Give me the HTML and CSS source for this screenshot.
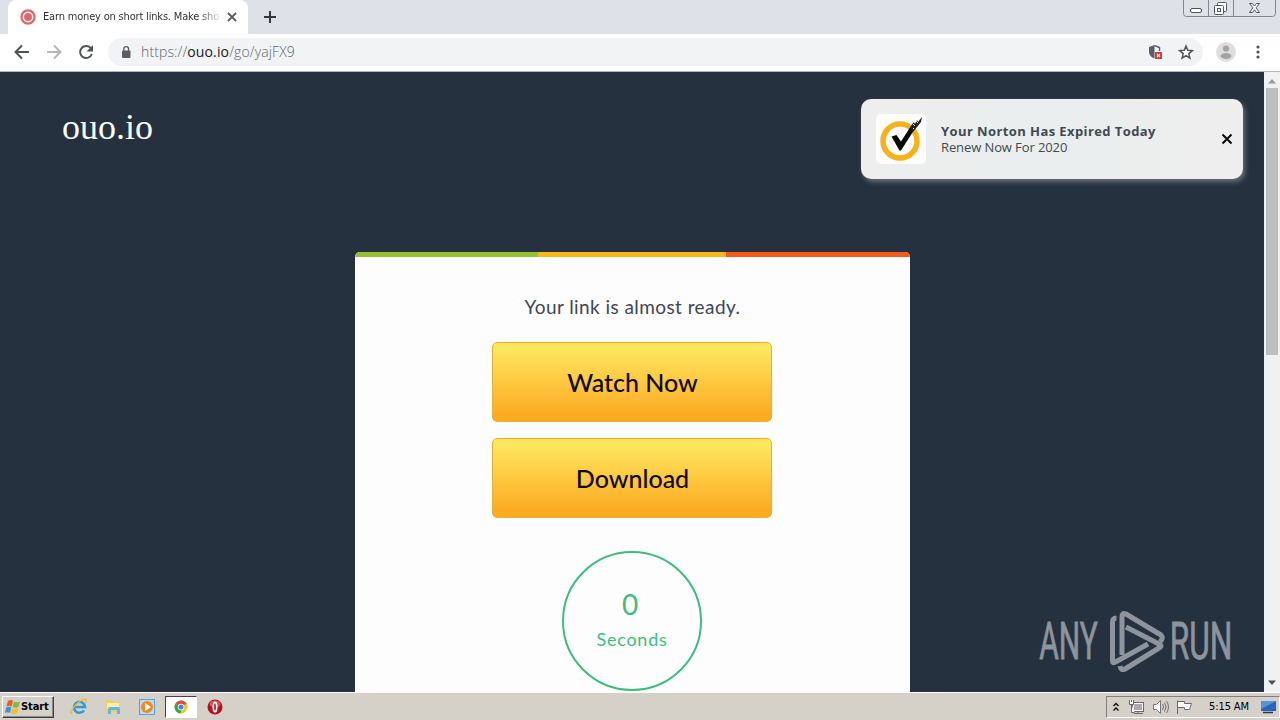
FILE: index.html
```html
<!DOCTYPE html>
<html lang="en">
<head>
  <meta charset="UTF-8">
  <meta name="viewport" content="width=device-width, initial-scale=1.0">
  <title>Earn money on short links</title>
  <link rel="stylesheet" href="styles.css">
</head>
<body>
  <div class="tab-strip">
    <div class="tab">
      <svg class="favicon" width="16" height="16" viewBox="0 0 16 16">
        <circle cx="8" cy="8" r="7.700" fill="#e0666c"/>
        <circle cx="8" cy="8" r="4.700" fill="#e0666c" stroke="#fff" stroke-width="1.500"/>
      </svg>
      <span class="tab-title">Earn money on short links. Make sho</span>
      <svg width="10" height="10" viewBox="0 0 10 10" stroke="#5a5d61" stroke-width="1.800"><path d="M1 1l8 8M9 1l-8 8"/></svg>
    </div>
    <svg class="new-tab" width="12" height="12" viewBox="0 0 12 12" stroke="#33363a" stroke-width="2"><path d="M6 0v12M0 6h12"/></svg>
    <svg class="window-buttons" width="94" height="18" viewBox="0 0 94 18" fill="none" stroke="#80858f">
      <path d="M.5 0v13.500q0 3 3 3h86q3 0 3-3V0M25.500 0v16M50.500 0v16"/>
      <rect x="7.500" y="8.500" width="11" height="4" rx="1.500" fill="#fff" stroke="#51555e"/>
      <g fill="#fff" stroke="#51555e">
        <rect x="34.500" y="2.500" width="9" height="9" rx="1"/>
        <rect x="31.500" y="5.500" width="9" height="9" rx="1"/>
        <rect x="34.500" y="8.500" width="3" height="3"/>
        <path d="M66.500 3.500h3l2 2.500 2-2.500h3l-3.400 4.300 3.400 4.700h-3l-2-2.700-2 2.700h-3l3.400-4.700z"/>
      </g>
    </svg>
  </div>

  <div class="toolbar">
    <svg class="nav-icon" width="16" height="16" viewBox="0 0 16 16" fill="none" stroke="#505357" stroke-width="2"><path d="M15 8H2M8 1.500L1.500 8 8 14.500"/></svg>
    <svg class="nav-icon" width="16" height="16" viewBox="0 0 16 16" fill="none" stroke="#b5b7ba" stroke-width="2"><path d="M1 8h13M8 1.500L14.500 8 8 14.500"/></svg>
    <svg class="nav-icon" width="16" height="16" viewBox="0 0 16 16"><path d="M13 4.500A6 6 0 1 0 13.800 10" fill="none" stroke="#505357" stroke-width="2"/><path d="M15 1v6.500H8.500z" fill="#505357"/></svg>
    <div class="address">
      <svg width="10" height="14" viewBox="0 0 10 14"><rect x="1" y="5.500" width="8.500" height="7.500" rx="1" fill="#5b5e62"/><path d="M2.800 6V4a2.400 2.400 0 0 1 4.800 0v2" fill="none" stroke="#5b5e62" stroke-width="1.300"/></svg>
      <span class="url">https://<b>ouo.io</b>/go/yajFX9</span>
      <svg class="shield" width="16" height="17" viewBox="0 0 16 17">
        <path d="M7.500 1L2 3v4.500C2 11 4.500 13.500 7.500 14.500z" fill="#5b5e66"/>
        <path d="M7.500 1.500L12.500 3.500V7" fill="none" stroke="#5b5e66" stroke-width="1.400"/>
        <rect x="8" y="8" width="7" height="7" fill="#d93a30"/>
        <path d="M10 10l3 3M13 10l-3 3" stroke="#fff" stroke-width="1.100"/>
      </svg>
      <svg width="16" height="16" viewBox="0 0 16 16"><path d="M8 2l1.700 4.200 4.600.4-3.500 3 1.100 4.500L8 11.700l-3.900 2.400 1.100-4.500-3.500-3 4.600-.4z" fill="#fff" stroke="#505357" stroke-width="1.500"/></svg>
    </div>
    <svg class="profile" width="20" height="20" viewBox="0 0 20 20"><circle cx="10" cy="10" r="10" fill="#dedede"/><circle cx="10" cy="6.500" r="3.100" fill="#a3a3a3"/><ellipse cx="10" cy="14" rx="5.500" ry="2.900" fill="#a3a3a3"/></svg>
    <svg class="more" width="4" height="14" viewBox="0 0 4 14" fill="#505357"><circle cx="2" cy="2" r="1.600"/><circle cx="2" cy="7" r="1.600"/><circle cx="2" cy="12" r="1.600"/></svg>
  </div>

  <div class="viewport">
    <main class="page">
      <div class="logo">ouo.io</div>
      <div class="card">
        <div class="stripe"><i class="green"></i><i class="yellow"></i><i class="orange"></i></div>
        <p class="ready">Your link is almost ready.</p>
        <button class="btn watch">Watch Now</button>
        <button class="btn download">Download</button>
        <div class="timer">
          <span class="count">0</span>
          <span class="unit">Seconds</span>
        </div>
      </div>

      <div class="notice">
        <svg class="norton" width="50" height="50" viewBox="0 0 50 50">
          <rect width="50" height="50" rx="5" fill="#fdfdfd"/>
          <circle cx="24" cy="27" r="17" fill="none" stroke="#f6b21b" stroke-width="5.500"/>
          <path d="M15.500 22.500l5-1.500 4.500 6.500 9-14 3-2 2 3-14 22h-1.500z" fill="#080808"/>
          <path d="M34 13l4-5 1 2 2-4 1 2 4-5-1 5-4 5-4 5z" fill="#222"/>
          <path d="M37 10l2 2M40 7l2 2M37 14l1 1M43 5l1 1" stroke="#ddd"/>
        </svg>
        <div class="notice-text">
          <strong>Your Norton Has Expired Today</strong>
          <span>Renew Now For 2020</span>
        </div>
        <svg class="close" width="12" height="12" viewBox="0 0 12 12" stroke="#080808" stroke-width="2"><path d="M1.500 1.500l9 9M10.500 1.500l-9 9"/></svg>
      </div>

      <svg class="watermark" width="194" height="64" viewBox="0 0 194 64">
        <g fill="#8d949c" stroke="#8d949c" stroke-width=".8" font-family="Roboto, sans-serif" font-size="51">
          <text x="2" y="49" textLength="101" lengthAdjust="spacingAndGlyphs" transform="scale(.58 1)">ANY</text>
          <text x="227" y="49" textLength="108" lengthAdjust="spacingAndGlyphs" transform="scale(.58 1)">RUN</text>
        </g>
        <g fill="none" stroke="#8d949c" stroke-width="5" stroke-linejoin="round">
          <path d="M78.500 8q-4 0-4 4v39q0 3 3 1L110 34"/>
          <path d="M84 45V7q0-5 4-3l35 21q3 3-1 7"/>
          <path d="M88 17l33 17q4 2 0 4L87 59q-4 2-5-3"/>
        </g>
      </svg>
    </main>
    <div class="scrollbar">
      <svg class="arrow" width="10" height="6" viewBox="0 0 10 6"><path d="M1 5.500L5 1l4 4.500z" fill="#9b9b9b"/></svg>
      <div class="thumb"></div>
      <svg class="arrow down" width="10" height="6" viewBox="0 0 10 6"><path d="M1 .5h8L5 5z" fill="#4d4d4d"/></svg>
    </div>
  </div>

  <div class="taskbar">
    <div class="start">
      <svg width="16" height="16" viewBox="0 0 16 16">
        <path d="M3 2q3-2 5 0L6.500 7.500Q4 6 1.500 7.500z" fill="#e65c29"/>
        <path d="M9 2.500q3 1.500 6 0L13.500 8q-3 1.500-6 0z" fill="#83b93f"/>
        <path d="M1.200 8.500q2.500-1.500 5 0L5 14q-3-1.500-5 0z" fill="#3f8fd2"/>
        <path d="M7.200 9q3 1.500 6 0L12 14q-3 2-6 0z" fill="#f5bd2e"/>
      </svg>
      <span>Start</span>
    </div>
    <div class="task">
      <svg width="18" height="18" viewBox="0 0 18 18" fill="none"><path d="M14 12.500A5.500 5.500 0 1 1 15 9H5" stroke="#2f9bd8" stroke-width="2.600"/><path d="M2 15C-1 17 2 9 9 4s9-3 6 1" stroke="#eebc35" stroke-width="1.400"/></svg>
    </div>
    <div class="task">
      <svg width="18" height="18" viewBox="0 0 18 18"><path d="M2 2h6l1 2h6v10H2z" fill="#edce67"/><path d="M3 5h12v6H3z" fill="#fbefb1"/><path d="M4 16v-5q0-2 2-2h8q2 0 2 2v5h-3v-4H7v4z" fill="#66b5dd"/></svg>
    </div>
    <div class="task">
      <svg width="18" height="18" viewBox="0 0 18 18"><rect x="1.500" y="1.500" width="15" height="15" fill="#b9dcf4" stroke="#5d9fd6"/><circle cx="9" cy="9" r="6" fill="#f08a1e"/><path d="M7 5l6 4-6 4z" fill="#fff"/></svg>
    </div>
    <div class="task active">
      <svg width="14" height="14" viewBox="0 0 14 14"><circle cx="7" cy="7" r="6.500" fill="#f3c62f"/><path d="M7 7L1.400 3.700A6.500 6.500 0 0 1 12.600 3.800z" fill="#dc4b3e"/><path d="M1.400 3.700A6.500 6.500 0 0 0 6.500 13.500L8 7z" fill="#34a455"/><circle cx="7" cy="7" r="3.200" fill="#fff"/><circle cx="7" cy="7" r="2.500" fill="#4285e8"/></svg>
    </div>
    <div class="task">
      <svg width="16" height="16" viewBox="0 0 16 16"><circle cx="8" cy="8" r="7.500" fill="#b5121b"/><ellipse cx="8" cy="5" rx="5.500" ry="3.500" fill="#d5544d"/><ellipse cx="8" cy="8" rx="1.700" ry="4.700" fill="#b5121b" stroke="#fff" stroke-width="1.700"/></svg>
    </div>
    <div class="tray">
      <svg width="8" height="10" viewBox="0 0 8 10" fill="none" stroke="#111" stroke-width="1.400"><path d="M1.500 4L4 1.500 6.500 4M1.500 8.500L4 6l2.500 2.500"/></svg>
      <svg class="net" width="17" height="16" viewBox="0 0 17 16" fill="#fff" stroke="#68686a"><rect x="4.500" y="3.500" width="11" height="9"/><path d="M6 5h8v6H6z" fill="#aaa" stroke="none"/><path d="M10 13v1M6 14.500h9M1.500 1v4.500h4V1M3.500 5.500v8h3M3.500 1v2"/></svg>
      <svg class="sound" width="17" height="16" viewBox="0 0 17 16" fill="none" stroke="#77777a"><path d="M1.500 5.500h3l4-4v13l-4-4h-3z" fill="#fff"/><path d="M10.500 5q2 3 0 6M12.500 3.500q3 4.500 0 9M14.500 2q4 6 0 12"/></svg>
      <svg class="flag" width="17" height="16" viewBox="0 0 17 16" fill="#fff" stroke="#68686a"><path d="M1.500 15V1.500M1.500 2.500h7v2h7l-2 6H8.500v-2h-7"/></svg>
      <span class="clock">5:15 AM</span>
      <svg class="desktop" width="16" height="14" viewBox="0 0 16 14"><rect x="1" y="1" width="15" height="10" fill="#2867b8"/><path d="M1 1h15L1 9z" fill="#5795d8"/><path d="M3 12.500h10" stroke="#1b3765" stroke-width="1.500"/></svg>
    </div>
  </div>
</body>
</html>
```

FILE: styles.css
```css
* {
  box-sizing: border-box;
}
body {
  margin: 0;
  width: 1280px;
  height: 720px;
  overflow: hidden;
  display: flex;
  flex-direction: column;
  font-family: "Open Sans", "Noto Sans", sans-serif;
  white-space: nowrap;
}
svg {
  display: block;
  flex: none;
}

/* browser */
.tab-strip {
  height: 34px;
  flex: none;
  background: #dee1e8;
  display: flex;
  align-items: flex-start;
  padding-left: 8px;
}
.tab {
  width: 240px;
  height: 34px;
  padding: 0 11px 0 12px;
  display: flex;
  align-items: center;
  background: #fff;
  border-radius: 8px 8px 0 0;
}
.tab-title {
  width: 176px;
  margin: 0 8px 0 7px;
  overflow: hidden;
  font: 11px "DejaVu Sans Condensed", "DejaVu Sans", sans-serif;
  font-stretch: condensed;
  line-height: 16px;
  letter-spacing: -0.18px;
  color: #333;
  -webkit-mask-image: linear-gradient(to right, #000 155px, transparent 180px);
}
.new-tab {
  margin: 11px 0 0 16px;
}
.window-buttons {
  margin-left: auto;
  margin-right: 3px;
}
.toolbar {
  height: 38px;
  flex: none;
  display: flex;
  align-items: center;
  padding: 0 20px 1px 14px;
  background: #fff;
  border-bottom: 1px solid #b3b7bc;
}
.nav-icon {
  margin-right: 16px;
}
.address {
  width: 1095px;
  height: 28px;
  margin-left: -2px;
  padding: 0 9px 0 13px;
  border-radius: 14px;
  background: #f1f3f5;
  display: flex;
  align-items: center;
}
.url {
  margin: -2px 0 0 10px;
  font-size: 14px;
  font-weight: 300;
  letter-spacing: 0.12px;
  color: #62666b;
}
.url b {
  font-weight: 400;
  color: #202124;
}
.shield {
  margin: 1px 15px 0 auto;
}
.profile {
  margin-left: 13px;
}
.more {
  margin-left: auto;
}

/* page */
.viewport {
  flex: 1;
  min-height: 0;
  display: flex;
}
.page {
  position: relative;
  width: 1264px;
  overflow: hidden;
  background: #25313f;
}
.logo {
  height: 180px;
  padding: 35px 0 0 62px;
  font: 36px/40px "Liberation Serif", serif;
  color: #fff;
}
.card {
  width: 555px;
  height: 460px;
  margin-left: 355px;
  display: flex;
  flex-direction: column;
  align-items: center;
  overflow: hidden;
  background: #fdfdfd;
  border-radius: 5px 5px 0 0;
  font-family: Lato, sans-serif;
}
.stripe {
  display: flex;
  width: 100%;
  height: 5px;
  flex: none;
}
.green {
  width: 183px;
  background: #98bf32;
}
.yellow {
  width: 188px;
  background: #f9b81a;
}
.orange {
  flex: 1;
  background: #f45b16;
}
.ready {
  margin: 37px 0 23px;
  font: 19px/25px Lato, sans-serif;
  letter-spacing: 0.43px;
  color: #3f4651;
}
.btn {
  width: 280px;
  height: 80px;
  flex: none;
  margin: 0 1px 16px 0;
  padding: 0 0 0 1px;
  border: 1px solid #e8b321;
  border-radius: 5px;
  background: linear-gradient(#ffe65f 8%, #fcab22 92%);
  font: 500 25px Lato, sans-serif;
  color: #0d0904;
}
.timer {
  width: 140px;
  height: 140px;
  flex: none;
  margin: 17px 1px 0 0;
  padding-top: 33px;
  border: 2px solid #3dbd7d;
  border-radius: 50%;
  display: flex;
  flex-direction: column;
  align-items: center;
  color: #3dbd7d;
}
.count {
  margin-right: 4px;
  font-size: 28px;
  line-height: 36px;
}
.unit {
  font-size: 18px;
  line-height: 34px;
  letter-spacing: 0.75px;
}
.notice {
  position: absolute;
  top: 27px;
  left: 861px;
  width: 382px;
  height: 80px;
  padding: 0 10px 0 15px;
  display: flex;
  align-items: center;
  background: linear-gradient(to right, #eeeeee, #eaeeee 50%, #efeeee);
  border-radius: 10px;
  box-shadow: 2px 3px 5px rgba(150, 150, 150, 0.6);
}
.notice-text {
  display: flex;
  flex-direction: column;
  margin: -1px 0 0 15px;
  font-size: 13px;
  line-height: 16px;
  color: #414951;
}
.notice-text strong {
  letter-spacing: 0.41px;
}
.notice-text span {
  letter-spacing: -0.1px;
}
.close {
  margin-left: auto;
}
.watermark {
  position: absolute;
  left: 1038px;
  top: 538px;
}
.scrollbar {
  width: 16px;
  display: flex;
  flex-direction: column;
  align-items: center;
  background: #f1f1f1;
}
.arrow {
  margin: 6px 0 4px;
}
.thumb {
  width: 12px;
  height: 267px;
  background: #bebebe;
}
.arrow.down {
  margin: auto 0 6px;
}

/* taskbar */
.taskbar {
  height: 28px;
  flex: none;
  display: flex;
  align-items: center;
  padding: 0 0 0 2px;
  border-top: 1px solid #fff;
  background: #d5d0c8;
}
.start {
  width: 52px;
  height: 22px;
  margin-right: 9px;
  padding-left: 2px;
  display: flex;
  align-items: center;
  border: 1px solid;
  border-color: #fff #404040 #404040 #fff;
  box-shadow: inset -1px -1px #888;
  font: bold 11px "DejaVu Sans Condensed", "DejaVu Sans", sans-serif;
  font-stretch: condensed;
  letter-spacing: -0.1px;
  color: #000;
}
.task {
  width: 32px;
  height: 22px;
  margin-right: 2px;
  display: flex;
  align-items: center;
  justify-content: center;
}
.task.active {
  border: 1px solid;
  border-color: #444 #fff #fff #444;
  background: #fff;
}
.tray {
  width: 174px;
  height: 22px;
  margin-left: auto;
  padding: 0 3px 0 5px;
  display: flex;
  align-items: center;
  border: 1px solid;
  border-color: #808080 #fff #fff #808080;
}
.net {
  margin-left: 8px;
}
.sound {
  margin-left: 7px;
}
.flag {
  margin-left: 7px;
}
.clock {
  margin-left: 16px;
  font: 11px "DejaVu Sans Condensed", "DejaVu Sans", sans-serif;
  font-stretch: condensed;
  letter-spacing: -0.1px;
  color: #000;
}
.desktop {
  margin-left: auto;
}
```
